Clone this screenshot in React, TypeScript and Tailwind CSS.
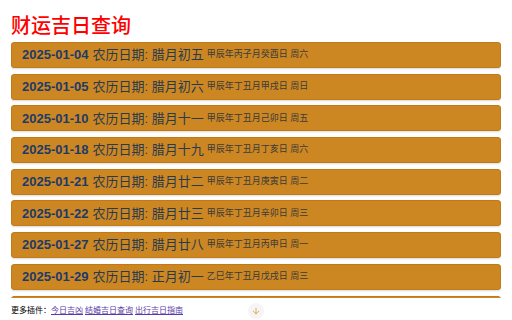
import { ArrowDown } from "lucide-react";

const days = [
  { date: "2025-01-04", lunar: "腊月初五", gz: "甲辰年丙子月癸酉日 周六" },
  { date: "2025-01-05", lunar: "腊月初六", gz: "甲辰年丁丑月甲戌日 周日" },
  { date: "2025-01-10", lunar: "腊月十一", gz: "甲辰年丁丑月己卯日 周五" },
  { date: "2025-01-18", lunar: "腊月十九", gz: "甲辰年丁丑月丁亥日 周六" },
  { date: "2025-01-21", lunar: "腊月廿二", gz: "甲辰年丁丑月庚寅日 周二" },
  { date: "2025-01-22", lunar: "腊月廿三", gz: "甲辰年丁丑月辛卯日 周三" },
  { date: "2025-01-27", lunar: "腊月廿八", gz: "甲辰年丁丑月丙申日 周一" },
  { date: "2025-01-29", lunar: "正月初一", gz: "乙巳年丁丑月戊戌日 周三" },
  { date: "2025-02-02", lunar: "正月初五", gz: "乙巳年戊寅月壬寅日 周日" },
];

export default function App() {
  return (
    <div className="relative h-[320px] w-[512px] overflow-hidden bg-white px-[11px] font-['Liberation_Sans','Noto_Sans_CJK_SC',sans-serif]">
      {/* Title */}
      <h1 className="mt-[13px] h-[29px] text-[20px] leading-[26px] font-medium text-[#ff0000]">
        财运吉日查询
      </h1>

      {/* Day list */}
      <div className="flex h-[256px] flex-col gap-[5.7px] overflow-hidden">
        {days.map((d) => (
          <div
            key={d.date}
            className="flex h-[26px] shrink-0 items-center whitespace-nowrap rounded-[3px] border border-[#c27a14] bg-[#cc8723] pl-[10px] shadow-[0_1px_2px_rgba(0,0,0,0.15)]"
          >
            <span className="text-[13px] font-bold text-[#1d3a6a]">{d.date}</span>
            <span className="ml-[4px] text-[13px] text-[#2a3a4e]">
              农历日期: {d.lunar}
            </span>
            <span className="ml-[3px] text-[9px] text-[#3a3a3a]">{d.gz}</span>
          </div>
        ))}
      </div>

      {/* Footer */}
      <div className="flex h-[22px] items-center gap-[2px] pt-[3px] text-[8px] text-black">
        <span className="mr-[-2px]">更多插件：</span>
        <a href="#" className="text-[#5a3aa8] underline">今日吉凶</a>
        <a href="#" className="text-[#5a3aa8] underline">结婚吉日查询</a>
        <a href="#" className="text-[#5a3aa8] underline">出行吉日指南</a>
      </div>

      {/* scroll button */}
      <div className="absolute left-[248px] top-[303px] flex h-[16px] w-[16px] items-center justify-center rounded-full bg-[#f5f5f5]">
        <ArrowDown size={10} strokeWidth={2} className="text-[#e39a3c]" />
      </div>
    </div>
  );
}
